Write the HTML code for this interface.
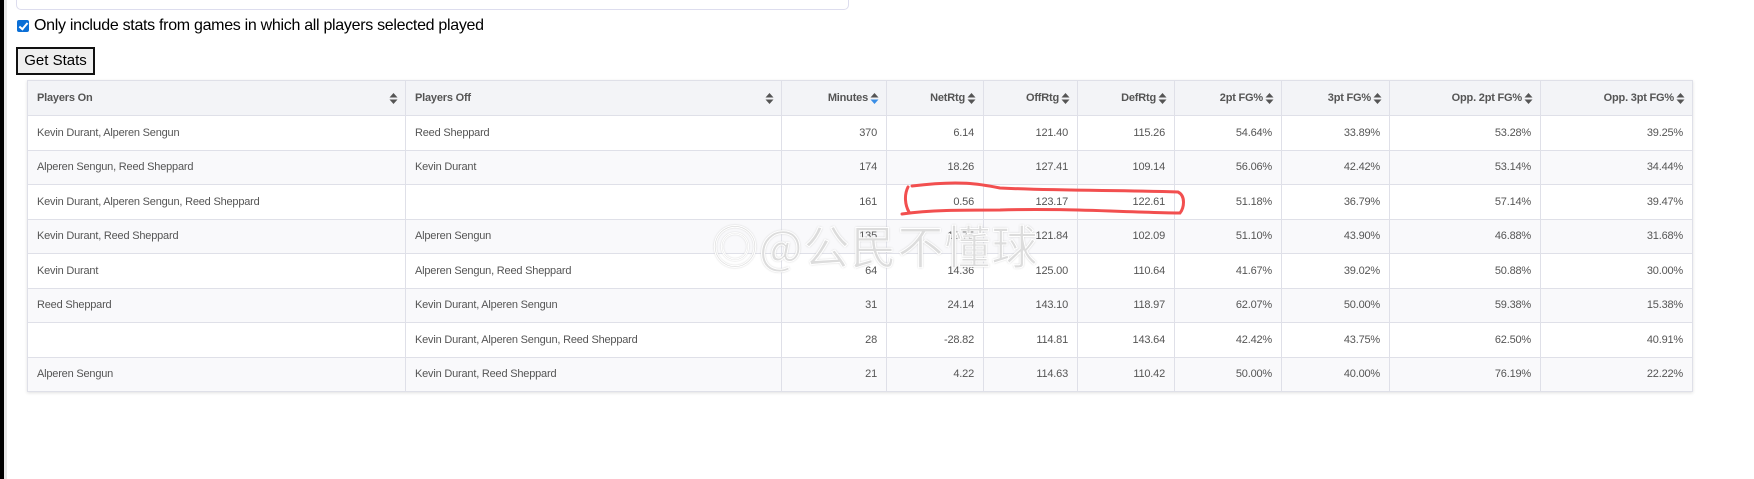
<!DOCTYPE html>
<html><head><meta charset="utf-8"><style>
*{box-sizing:border-box}
body{margin:0;width:1754px;height:479px;background:#fff;position:relative;overflow:hidden;font-family:"Segoe UI","Liberation Sans",sans-serif}
.bar{position:absolute;left:0;top:0;width:4px;height:479px;background:#000}
.bar2{position:absolute;left:4px;top:0;width:3px;height:479px;background:#e8e8e8}
.inp{position:absolute;left:16px;top:-10px;width:833px;height:20px;border:1px solid #dde;border-radius:5px}
.chk{position:absolute;left:17px;top:20px;width:12px;height:12px;background:#0b6fd6;border-radius:2px}
.chk:after{content:"";position:absolute;left:4px;top:1px;width:3px;height:7px;border:solid #fff;border-width:0 2px 2px 0;transform:rotate(40deg)}
.lbl{position:absolute;left:34px;top:17px;font-size:16px;color:#000;font-family:"Liberation Sans",sans-serif;letter-spacing:-0.3px}
.btn{position:absolute;left:16px;top:47px;width:79px;height:28px;border:2px solid #111;background:#efefef;font-size:15px;font-family:"Liberation Sans",sans-serif;text-align:center;line-height:24px}
table{position:absolute;left:27px;top:80px;border-collapse:collapse;box-shadow:0 1px 3px rgba(0,0,0,.12);font-family:"Liberation Sans",sans-serif}
td,th{border:1px solid #dfe0e8;font-size:11px;color:#555;padding:0 8px;height:34.5px;letter-spacing:-0.2px}
th{height:35px;background:#f3f4f7;font-weight:bold;color:#555;position:relative}
th.r{text-align:right;padding-right:18px}
th.l{text-align:left;padding-left:9px}
td{text-align:right;padding-right:9px}
td.l{text-align:left;padding-left:9px}
tr:nth-child(odd) td{background:#f9f9fb}
tr:nth-child(even) td{background:#fff}
.s{position:absolute;right:7px;top:11px;width:9px;height:13px}
.w{position:absolute;left:712px;top:212px;font-size:46px;color:#dcdcdc;font-family:"Noto Sans CJK SC",sans-serif;-webkit-text-stroke:1px #fff;text-shadow:0 0 2px #bbb;letter-spacing:1px}
</style></head><body>
<div class="bar"></div><div class="bar2"></div>
<div class="inp"></div>
<div class="chk"></div>
<div class="lbl">Only include stats from games in which all players selected played</div>
<div class="btn">Get Stats</div>
<table>
<colgroup><col style="width:378px"><col style="width:376px"><col style="width:105px"><col style="width:97px"><col style="width:94px"><col style="width:97px"><col style="width:107px"><col style="width:108px"><col style="width:151px"><col style="width:152px"></colgroup>
<tr>
<th class="l">Players On<svg class="s" viewBox="0 0 9 13"><path d="M0.5 5.5L4.5 1 8.5 5.5Z M0.5 7.5L4.5 12 8.5 7.5Z" fill="#555"/></svg></th>
<th class="l">Players Off<svg class="s" viewBox="0 0 9 13"><path d="M0.5 5.5L4.5 1 8.5 5.5Z M0.5 7.5L4.5 12 8.5 7.5Z" fill="#555"/></svg></th>
<th class="r">Minutes<svg class="s" viewBox="0 0 9 13"><path d="M0.5 5.5L4.5 1 8.5 5.5Z" fill="#555"/><path d="M0.5 7.5L4.5 12 8.5 7.5Z" fill="#3a8ee6"/></svg></th>
<th class="r">NetRtg<svg class="s" viewBox="0 0 9 13"><path d="M0.5 5.5L4.5 1 8.5 5.5Z M0.5 7.5L4.5 12 8.5 7.5Z" fill="#555"/></svg></th>
<th class="r">OffRtg<svg class="s" viewBox="0 0 9 13"><path d="M0.5 5.5L4.5 1 8.5 5.5Z M0.5 7.5L4.5 12 8.5 7.5Z" fill="#555"/></svg></th>
<th class="r">DefRtg<svg class="s" viewBox="0 0 9 13"><path d="M0.5 5.5L4.5 1 8.5 5.5Z M0.5 7.5L4.5 12 8.5 7.5Z" fill="#555"/></svg></th>
<th class="r">2pt FG%<svg class="s" viewBox="0 0 9 13"><path d="M0.5 5.5L4.5 1 8.5 5.5Z M0.5 7.5L4.5 12 8.5 7.5Z" fill="#555"/></svg></th>
<th class="r">3pt FG%<svg class="s" viewBox="0 0 9 13"><path d="M0.5 5.5L4.5 1 8.5 5.5Z M0.5 7.5L4.5 12 8.5 7.5Z" fill="#555"/></svg></th>
<th class="r">Opp. 2pt FG%<svg class="s" viewBox="0 0 9 13"><path d="M0.5 5.5L4.5 1 8.5 5.5Z M0.5 7.5L4.5 12 8.5 7.5Z" fill="#555"/></svg></th>
<th class="r">Opp. 3pt FG%<svg class="s" viewBox="0 0 9 13"><path d="M0.5 5.5L4.5 1 8.5 5.5Z M0.5 7.5L4.5 12 8.5 7.5Z" fill="#555"/></svg></th>
</tr>
<tr><td class="l">Kevin Durant, Alperen Sengun</td><td class="l">Reed Sheppard</td><td>370</td><td>6.14</td><td>121.40</td><td>115.26</td><td>54.64%</td><td>33.89%</td><td>53.28%</td><td>39.25%</td></tr>
<tr><td class="l">Alperen Sengun, Reed Sheppard</td><td class="l">Kevin Durant</td><td>174</td><td>18.26</td><td>127.41</td><td>109.14</td><td>56.06%</td><td>42.42%</td><td>53.14%</td><td>34.44%</td></tr>
<tr><td class="l">Kevin Durant, Alperen Sengun, Reed Sheppard</td><td class="l"></td><td>161</td><td>0.56</td><td>123.17</td><td>122.61</td><td>51.18%</td><td>36.79%</td><td>57.14%</td><td>39.47%</td></tr>
<tr><td class="l">Kevin Durant, Reed Sheppard</td><td class="l">Alperen Sengun</td><td>135</td><td>19.75</td><td>121.84</td><td>102.09</td><td>51.10%</td><td>43.90%</td><td>46.88%</td><td>31.68%</td></tr>
<tr><td class="l">Kevin Durant</td><td class="l">Alperen Sengun, Reed Sheppard</td><td>64</td><td>14.36</td><td>125.00</td><td>110.64</td><td>41.67%</td><td>39.02%</td><td>50.88%</td><td>30.00%</td></tr>
<tr><td class="l">Reed Sheppard</td><td class="l">Kevin Durant, Alperen Sengun</td><td>31</td><td>24.14</td><td>143.10</td><td>118.97</td><td>62.07%</td><td>50.00%</td><td>59.38%</td><td>15.38%</td></tr>
<tr><td class="l"></td><td class="l">Kevin Durant, Alperen Sengun, Reed Sheppard</td><td>28</td><td>-28.82</td><td>114.81</td><td>143.64</td><td>42.42%</td><td>43.75%</td><td>62.50%</td><td>40.91%</td></tr>
<tr><td class="l">Alperen Sengun</td><td class="l">Kevin Durant, Reed Sheppard</td><td>21</td><td>4.22</td><td>114.63</td><td>110.42</td><td>50.00%</td><td>40.00%</td><td>76.19%</td><td>22.22%</td></tr>
</table>
<svg style="position:absolute;left:0;top:0" width="1754" height="479"><path d="M912 186 C 960 180, 980 184, 1000 188 C 1060 191, 1120 190, 1178 192 C 1186 196, 1184 208, 1180 213 C 1120 212, 1060 208, 1000 210 C 960 210, 930 210, 902 214 M908 187 C 904 195, 905 205, 909 212" fill="none" stroke="#f24f4f" stroke-width="3" stroke-linecap="round"/></svg>
<div class="w">◎@公民不懂球</div>
</body></html>
